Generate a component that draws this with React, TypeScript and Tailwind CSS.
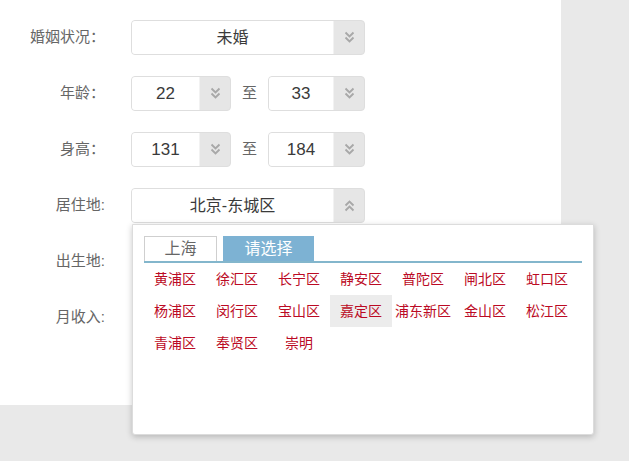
import React from "react";

const CJK = '"Liberation Sans", "Noto Sans CJK SC", sans-serif';

function Chevrons({ up = false }: { up?: boolean }) {
  return (
    <svg width="11" height="13" viewBox="0 0 11 13" fill="none" style={{ transform: up ? "rotate(180deg)" : undefined }}>
      <path d="M1.5 1.5 L5.5 5.5 L9.5 1.5 M1.5 6.5 L5.5 10.5 L9.5 6.5" stroke="#a8a8a8" strokeWidth="1.9" />
    </svg>
  );
}

function Select({ value, w, up = false, size = "text-[16px]" }: { value: string; w: string; up?: boolean; size?: string }) {
  return (
    <div className={`${w} h-[35px] flex rounded-[4px] border border-[#dedede] bg-[#e6e6e6] overflow-hidden`}>
      <div className={`flex-1 bg-white border-r border-[#f2f2f2] flex items-center justify-center text-[#3a3a3a] ${size}`}>{value}</div>
      <div className="w-[30px] flex items-center justify-center">
        <Chevrons up={up} />
      </div>
    </div>
  );
}

function Row({ label, children }: { label: string; children?: React.ReactNode }) {
  return (
    <div className="flex items-center h-[35px]">
      <div className="w-[105px] text-right text-[15px] text-[#666]">{label}</div>
      <div className="ml-[26px] flex items-center">{children}</div>
    </div>
  );
}

const districts = [
  "黄浦区", "徐汇区", "长宁区", "静安区", "普陀区", "闸北区", "虹口区",
  "杨浦区", "闵行区", "宝山区", "嘉定区", "浦东新区", "金山区", "松江区",
  "青浦区", "奉贤区", "崇明",
];

export default function App() {
  return (
    <div className="relative w-[629px] h-[461px] bg-[#e9e9e9] overflow-hidden" style={{ fontFamily: CJK }}>
      <div className="w-[561px] h-[405px] bg-white pt-[20px] flex flex-col gap-[21px]">
        <Row label="婚姻状况：">
          <Select value="未婚" w="w-[234px]" />
        </Row>
        <Row label="年龄：">
          <Select value="22" w="w-[100px]" size="text-[17px]" />
          <span className="w-[37px] text-center text-[15px] text-[#666]">至</span>
          <Select value="33" w="w-[97px]" size="text-[17px]" />
        </Row>
        <Row label="身高：">
          <Select value="131" w="w-[100px]" size="text-[17px]" />
          <span className="w-[37px] text-center text-[15px] text-[#666]">至</span>
          <Select value="184" w="w-[97px]" size="text-[17px]" />
        </Row>
        <Row label="居住地:">
          <Select value="北京-东城区" w="w-[234px]" up />
        </Row>
        <Row label="出生地:" />
        <Row label="月收入:" />
      </div>

      <div className="absolute left-[132px] top-[224px] w-[462px] h-[211px] bg-white border border-[#dcdcdc] rounded-b-[3px] shadow-[0_2px_6px_rgba(0,0,0,0.22)] px-[11px] pt-[11px]">
        <div className="flex items-end gap-[6px] border-b-[2px] border-[#83b6cc]">
          <div className="w-[73px] h-[25px] border border-b-0 border-[#cfcfcf] bg-white flex items-center justify-center text-[16px] text-[#666]">上海</div>
          <div className="w-[91px] h-[25px] bg-[#7db2d3] flex items-center justify-center text-[16px] text-white">请选择</div>
        </div>
        <div className="grid grid-cols-[repeat(7,62px)]">
          {districts.map((d) => (
            <div
              key={d}
              className={`h-[32px] flex items-center justify-center text-[14px] text-[#bb0a24] ${d === "嘉定区" ? "bg-[#ececec]" : ""}`}
            >
              {d}
            </div>
          ))}
        </div>
      </div>
    </div>
  );
}
